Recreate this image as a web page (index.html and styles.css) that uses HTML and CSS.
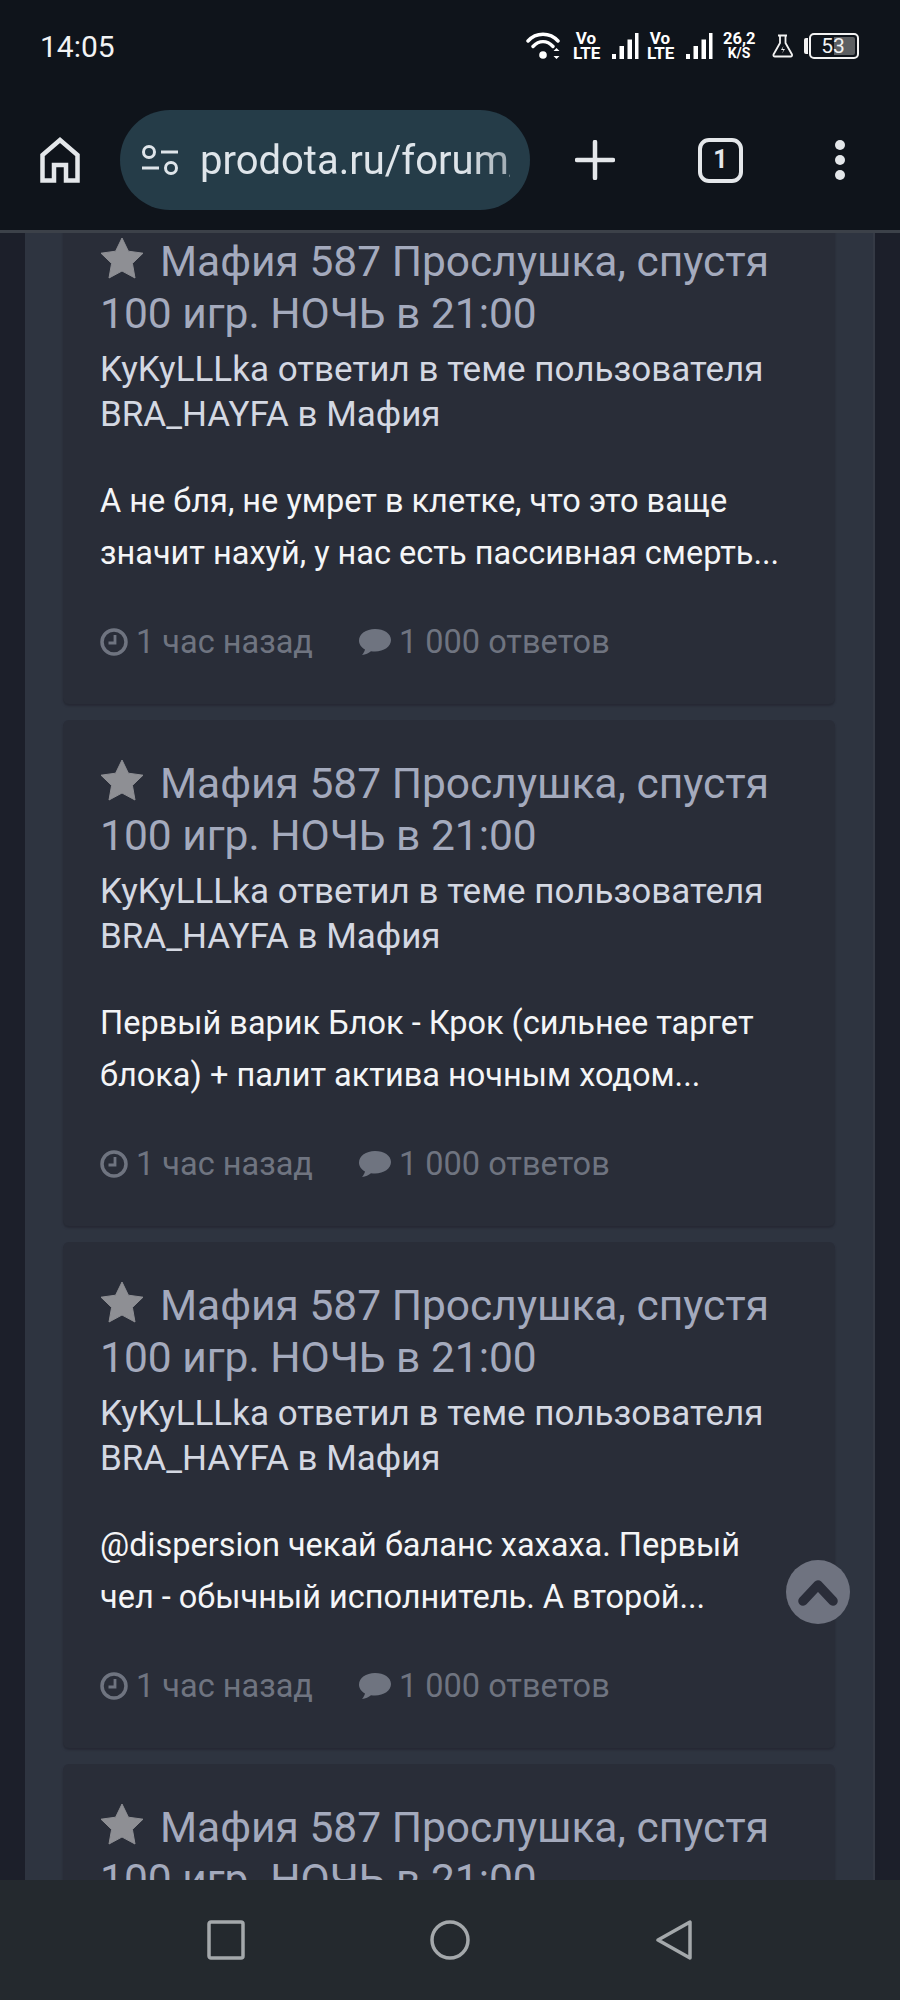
FILE: index.html
```html
<!DOCTYPE html>
<html lang="en">
<head>
    <meta charset="UTF-8">
    <title>prodota.ru/forum</title>
    <link rel="stylesheet" href="styles.css">
</head>
<body>
    <div class="phone">
        <header class="chrome">
            <div class="status-bar">
                <span class="time">14:05</span>
                <div class="status-icons">
                    <svg class="wifi" width="36" height="30" viewBox="0 0 36 30">
                        <path d="M2 10 C10 1 24 1 32 10 M7 15.500 C13 9 21 9 27 15.500" fill="none" stroke="#fff" stroke-width="3.400" stroke-linecap="round"/>
                        <circle cx="17" cy="24" r="3.800" fill="#fff"/>
                        <path d="M30.500 17 l3 3 h-6z M30.500 28 l3 -3 h-6z" fill="#fff"/>
                    </svg>
                    <span class="volte">Vo<br>LTE</span>
                    <svg class="signal" width="28" height="28" viewBox="0 0 28 28"><path d="M1 22h4v5H1z M8.500 14H13v13H8.500z M16.500 7.500H21V27h-4.500z M24 1h3.500v26H24z" fill="#fff"/></svg>
                    <span class="volte">Vo<br>LTE</span>
                    <svg class="signal" width="28" height="28" viewBox="0 0 28 28"><path d="M1 22h4v5H1z M8.500 14H13v13H8.500z M16.500 7.500H21V27h-4.500z M24 1h3.500v26H24z" fill="#fff"/></svg>
                    <span class="speed">26,2<small>K/S</small></span>
                    <svg class="flask" width="22" height="24" viewBox="0 0 22 24">
                        <path d="M6 1.500h9 M8 2v7L1.500 20.500Q1 22.500 3 22.500h15.500q2 0 1.500-2L13.500 9V2" fill="none" stroke="#f2f2f2" stroke-width="1.800" stroke-linejoin="round"/>
                        <path d="M11.500 12l-2.500 4h2.500l-1.500 3.500 3-4.500h-2.500z" fill="#f2f2f2"/>
                    </svg>
                    <div class="battery">
                        <i class="battery-nub"></i>
                        <div class="battery-body"><i class="battery-fill"></i><span>53</span></div>
                    </div>
                </div>
            </div>
            <div class="toolbar">
                <svg class="home" width="40" height="46" viewBox="0 0 40 46">
                    <path d="M2.500 43.500V18L20 3l17.500 15v25.500H26V28H14v15.500z" fill="none" stroke="#e4e7ea" stroke-width="4.500"/>
                </svg>
                <div class="url-pill">
                    <svg width="38" height="32" viewBox="0 0 38 32">
                        <circle cx="8" cy="8" r="5.500" fill="none" stroke="#dfe5ea" stroke-width="3"/>
                        <circle cx="30" cy="24" r="5.500" fill="none" stroke="#dfe5ea" stroke-width="3"/>
                        <path d="M20 8h17 M1 24h17" stroke="#dfe5ea" stroke-width="3"/>
                    </svg>
                    <span class="url-text">prodota.ru/forum/</span>
                </div>
                <svg class="plus" width="40" height="40" viewBox="0 0 40 40">
                    <path d="M20 2v36 M2 20h36" stroke="#e4e7ea" stroke-width="4.500" stroke-linecap="round"/>
                </svg>
                <div class="tab-count">1</div>
                <div class="menu-dots"><i></i><i></i><i></i></div>
            </div>
        </header>

        <main class="viewport">
            <div class="forum-panel">
                <article class="card">
                    <h3 class="card-title"><svg class="star" viewBox="0 0 44 42"><path d="M22 1l6.400 13.200 14.600 2-10.600 10.200 2.600 14.600L22 34l-13 7 2.600-14.600L1 16.200l14.600-2z" fill="#8e8f94" stroke="#8e8f94" stroke-linejoin="round"/></svg>Мафия 587 Прослушка, спустя 100 игр. НОЧЬ в 21:00</h3>
                    <p class="card-sub">KyKyLLLka ответил в теме пользователя BRA_HAYFA в Мафия</p>
                    <p class="card-text">А не бля, не умрет в клетке, что это ваще значит нахуй, у нас есть пассивная смерть...</p>
                    <div class="card-meta">
                        <span class="meta-item"><svg width="28" height="28" viewBox="0 0 28 28"><circle cx="14" cy="14" r="12" fill="none" stroke="#6f7480" stroke-width="3.500"/><path d="M15 7v8H8.500" fill="none" stroke="#6f7480" stroke-width="2.800"/></svg>1 час назад</span>
                        <span class="meta-item"><svg width="34" height="28" viewBox="0 0 34 28"><path d="M17 1C8 1 1 6 1 12.500c0 3.800 2.400 7 6 9-.5 2-1.500 3.800-3 5.500 3.500-.4 6.800-1.900 9-3.800 1.300.2 2.700.3 4 .3 9 0 16-5 16-11.500S26 1 17 1z" fill="#6f7480"/></svg>1 000 ответов</span>
                    </div>
                </article>
                <article class="card">
                    <h3 class="card-title"><svg class="star" viewBox="0 0 44 42"><path d="M22 1l6.400 13.200 14.600 2-10.600 10.200 2.600 14.600L22 34l-13 7 2.600-14.600L1 16.200l14.600-2z" fill="#8e8f94" stroke="#8e8f94" stroke-linejoin="round"/></svg>Мафия 587 Прослушка, спустя 100 игр. НОЧЬ в 21:00</h3>
                    <p class="card-sub">KyKyLLLka ответил в теме пользователя BRA_HAYFA в Мафия</p>
                    <p class="card-text">Первый варик Блок - Крок (сильнее таргет блока) + палит актива ночным ходом...</p>
                    <div class="card-meta">
                        <span class="meta-item"><svg width="28" height="28" viewBox="0 0 28 28"><circle cx="14" cy="14" r="12" fill="none" stroke="#6f7480" stroke-width="3.500"/><path d="M15 7v8H8.500" fill="none" stroke="#6f7480" stroke-width="2.800"/></svg>1 час назад</span>
                        <span class="meta-item"><svg width="34" height="28" viewBox="0 0 34 28"><path d="M17 1C8 1 1 6 1 12.500c0 3.800 2.400 7 6 9-.5 2-1.500 3.800-3 5.500 3.500-.4 6.800-1.900 9-3.800 1.300.2 2.700.3 4 .3 9 0 16-5 16-11.500S26 1 17 1z" fill="#6f7480"/></svg>1 000 ответов</span>
                    </div>
                </article>
                <article class="card">
                    <h3 class="card-title"><svg class="star" viewBox="0 0 44 42"><path d="M22 1l6.400 13.200 14.600 2-10.600 10.200 2.600 14.600L22 34l-13 7 2.600-14.600L1 16.200l14.600-2z" fill="#8e8f94" stroke="#8e8f94" stroke-linejoin="round"/></svg>Мафия 587 Прослушка, спустя 100 игр. НОЧЬ в 21:00</h3>
                    <p class="card-sub">KyKyLLLka ответил в теме пользователя BRA_HAYFA в Мафия</p>
                    <p class="card-text">@dispersion чекай баланс хахаха. Первый чел - обычный исполнитель. А второй...</p>
                    <div class="card-meta">
                        <span class="meta-item"><svg width="28" height="28" viewBox="0 0 28 28"><circle cx="14" cy="14" r="12" fill="none" stroke="#6f7480" stroke-width="3.500"/><path d="M15 7v8H8.500" fill="none" stroke="#6f7480" stroke-width="2.800"/></svg>1 час назад</span>
                        <span class="meta-item"><svg width="34" height="28" viewBox="0 0 34 28"><path d="M17 1C8 1 1 6 1 12.500c0 3.800 2.400 7 6 9-.5 2-1.500 3.800-3 5.500 3.500-.4 6.800-1.900 9-3.800 1.300.2 2.700.3 4 .3 9 0 16-5 16-11.500S26 1 17 1z" fill="#6f7480"/></svg>1 000 ответов</span>
                    </div>
                </article>
                <article class="card">
                    <h3 class="card-title"><svg class="star" viewBox="0 0 44 42"><path d="M22 1l6.400 13.200 14.600 2-10.600 10.200 2.600 14.600L22 34l-13 7 2.600-14.600L1 16.200l14.600-2z" fill="#8e8f94" stroke="#8e8f94" stroke-linejoin="round"/></svg>Мафия 587 Прослушка, спустя 100 игр. НОЧЬ в 21:00</h3>
                </article>
            </div>
            <div class="to-top">
                <svg width="42" height="30" viewBox="0 0 42 30"><path d="M6 24L21 8l15 16" fill="none" stroke="#2a2d39" stroke-width="9.500" stroke-linecap="round" stroke-linejoin="round"/></svg>
            </div>
        </main>

        <footer class="nav-bar">
            <svg width="38" height="40" viewBox="0 0 38 40"><rect x="2" y="2" width="34" height="36" rx="2" fill="none" stroke="#a4a8ab" stroke-width="3.500"/></svg>
            <svg width="40" height="40" viewBox="0 0 40 40"><circle cx="20" cy="20" r="18" fill="none" stroke="#a4a8ab" stroke-width="3.500"/></svg>
            <svg width="38" height="40" viewBox="0 0 38 40"><path d="M35 2v36L3 20z" fill="none" stroke="#a4a8ab" stroke-width="3.500" stroke-linejoin="round"/></svg>
        </footer>
    </div>
</body>
</html>
```
FILE: styles.css
```css
* {
    box-sizing: border-box;
}
body {
    margin: 0;
    background: #1c1f2a;
    font-family: Roboto, sans-serif;
}
.phone {
    width: 900px;
    height: 2000px;
    display: flex;
    flex-direction: column;
    overflow: hidden;
}

/* browser chrome */
.chrome {
    height: 233px;
    flex: none;
    background: #0f141b;
    border-bottom: 3px solid #3c4149;
    position: relative;
    z-index: 2;
}
.status-bar {
    height: 92px;
    display: flex;
    justify-content: space-between;
    align-items: center;
    padding: 0 41px 0 40px;
}
.time {
    color: #f2f3f4;
    font-size: 30px;
}
.status-icons {
    display: flex;
    align-items: center;
    height: 32px;
}
.wifi {
    margin: 0 11px 0 1px;
}
.volte {
    width: 26px;
    color: #fff;
    font-size: 17px;
    font-weight: 700;
    line-height: 15px;
    text-align: center;
}
.signal {
    margin: 0 8px 0 12px;
}
.speed {
    width: 32px;
    margin-left: 2px;
    color: #fff;
    font-size: 16.500px;
    font-weight: 700;
    line-height: 15px;
    text-align: center;
}
.speed small {
    display: block;
    font-size: 14px;
}
.flask {
    margin: 0 10px 0 17px;
}
.battery {
    display: flex;
    align-items: center;
}
.battery-nub {
    width: 4px;
    height: 16px;
    margin-right: 1px;
    background: #f2f2f2;
    border-radius: 2px 0 0 2px;
}
.battery-body {
    position: relative;
    width: 50px;
    height: 26px;
    padding-right: 2px;
    border: 2px solid #f2f2f2;
    border-radius: 5px;
    color: #f2f2f2;
    font-size: 21px;
    line-height: 22px;
    text-align: center;
}
.battery-fill {
    position: absolute;
    top: 2px;
    right: 2px;
    bottom: 2px;
    width: 21px;
    background: #5c5f62;
    border-radius: 0 2px 2px 0;
}
.battery-body span {
    position: relative;
}
.toolbar {
    height: 100px;
    margin-top: 18px;
    display: flex;
    align-items: center;
}
.home {
    margin: 0 40px;
}
.url-pill {
    width: 410px;
    height: 100px;
    display: flex;
    align-items: center;
    gap: 21px;
    padding: 0 20px 0 21px;
    background: #253c48;
    border-radius: 50px;
    overflow: hidden;
}
.url-pill svg {
    flex: none;
}
.url-text {
    color: #dfe5ea;
    font-size: 40px;
    white-space: nowrap;
    overflow: hidden;
    -webkit-mask-image: linear-gradient(90deg, #000 85%, rgba(0, 0, 0, 0.65) 100%);
    mask-image: linear-gradient(90deg, #000 85%, rgba(0, 0, 0, 0.65) 100%);
}
.plus {
    margin-left: 45px;
}
.tab-count {
    width: 45px;
    height: 45px;
    margin-left: 83px;
    border: 4.500px solid #e4e7ea;
    border-radius: 11px;
    color: #e4e7ea;
    font-size: 25px;
    font-weight: 700;
    line-height: 36px;
    text-align: center;
}
.menu-dots {
    display: flex;
    flex-direction: column;
    gap: 5px;
    margin-left: 92px;
}
.menu-dots i {
    width: 10px;
    height: 10px;
    background: #e4e7ea;
    border-radius: 50%;
}

/* page behind the chrome */
.viewport {
    flex: 1;
    position: relative;
    overflow: hidden;
    background: #1c1f2a;
}
.forum-panel {
    width: 850px;
    margin: -35px 0 0 25px;
    padding: 0 38px;
    display: flex;
    flex-direction: column;
    gap: 16px;
    background: #2e3440;
    border-right: 2px solid #353a45;
}
.card {
    height: 506px;
    padding: 38px 37px 0;
    background: #292d38;
    border-radius: 6px;
    box-shadow: 0 2px 2px #262934;
}
.card-title {
    margin: 0;
    color: #a4aabd;
    font-size: 42.500px;
    font-weight: 400;
    line-height: 52px;
}
.star {
    width: 44px;
    height: 42px;
    margin-right: 16px;
    vertical-align: -3px;
}
.card-sub {
    margin: 7px 0 0;
    color: #d4d8e2;
    font-size: 35px;
    line-height: 45px;
}
.card-text {
    margin: 38px 0 0;
    color: #f4f5f7;
    font-size: 32.500px;
    line-height: 52px;
}
.card-meta {
    display: flex;
    gap: 45px;
    margin-top: 37px;
    color: #6f7480;
    font-size: 32.500px;
    line-height: 52px;
}
.meta-item {
    display: flex;
    align-items: center;
    gap: 7px;
}
.meta-item:first-child {
    gap: 8px;
}
.to-top {
    position: absolute;
    left: 786px;
    top: 1327px;
    width: 64px;
    height: 64px;
    display: flex;
    align-items: center;
    justify-content: center;
    background: #6f7380;
    border-radius: 50%;
}

/* android nav */
.nav-bar {
    height: 120px;
    flex: none;
    background: #24292e;
    position: relative;
    z-index: 2;
    display: flex;
    align-items: center;
    justify-content: center;
    gap: 185px;
}
```
